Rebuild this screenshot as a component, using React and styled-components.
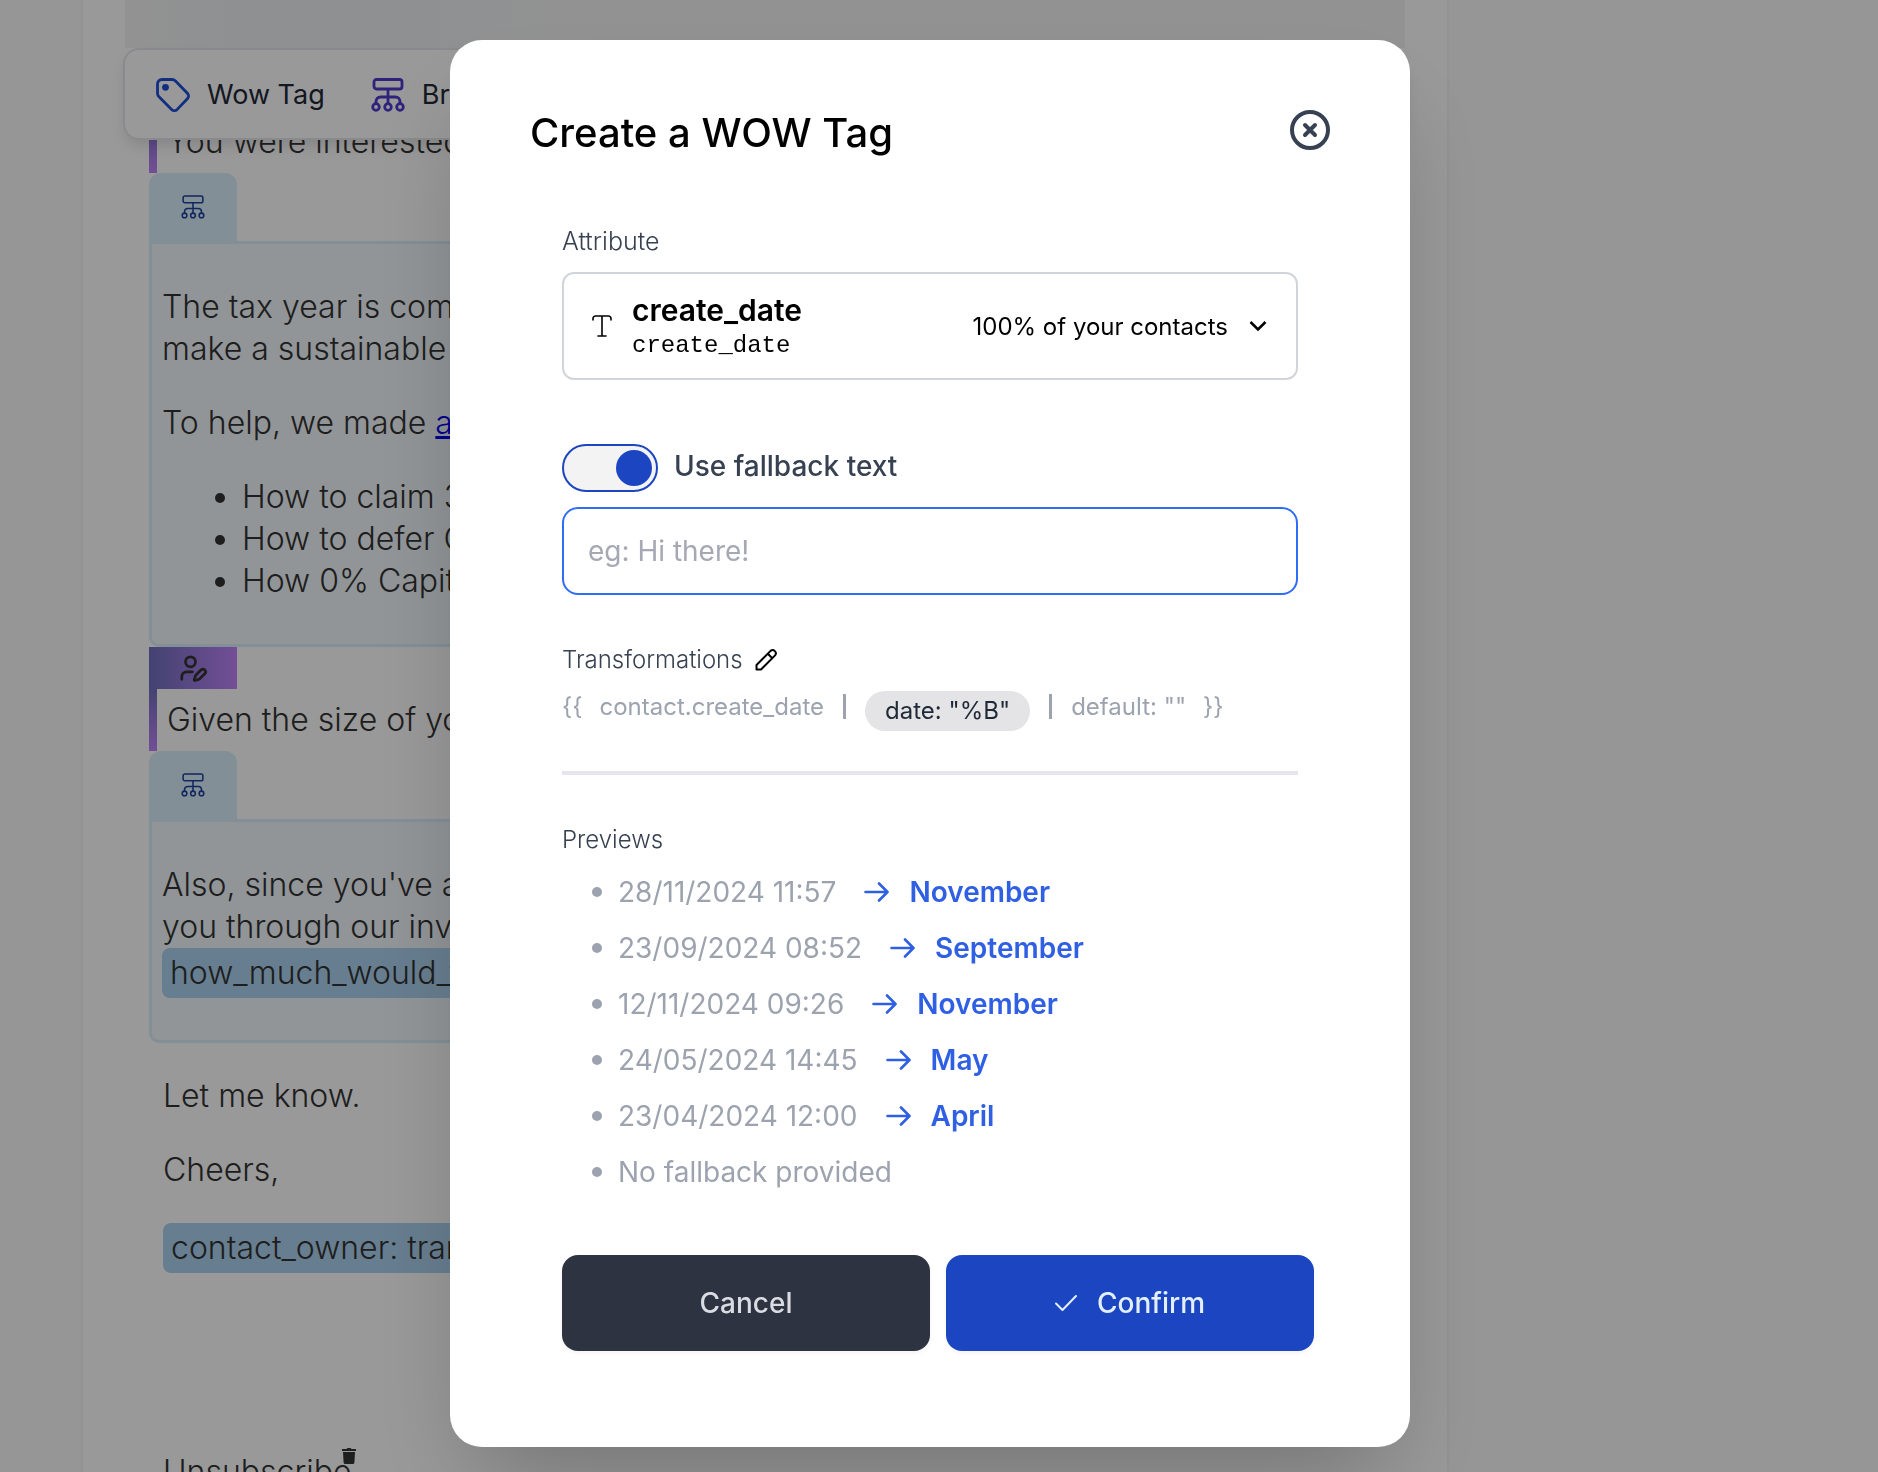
import { useState } from "react";
import styled, { createGlobalStyle } from "styled-components";
import { UserPen } from "lucide-react";

const GlobalStyle = createGlobalStyle`
  * {
    box-sizing: border-box;
  }

  body {
    margin: 0;
    background: #fafafa;
    font-family: Inter, "Liberation Sans", sans-serif;
  }

  button,
  input,
  select {
    font: inherit;
  }
`;

/* ---------- email editor behind the modal ---------- */

const Page = styled.div`
  height: 100vh;
  overflow: hidden;
  padding: 0 429px 0 81px;
`;

const Sheet = styled.main`
  min-height: 100%;
  padding: 0 40px;
  background: white;
  border: solid #f3f4f6;
  border-width: 0 2px;
`;

const Banner = styled.div`
  height: 48px;
  margin: 0 2px;
  background: linear-gradient(90deg, #f4f4f4, #eff1f3 8%, #eff1f3 24%, #f4f4f4 36%);
`;

const Toolbar = styled.nav`
  position: relative;
  z-index: 1;
  display: flex;
  align-items: center;
  gap: 46px;
  height: 92px;
  padding: 2px 31px 0;
  background: white;
  border: 2px solid #e5e7eb;
  border-radius: 16px;
  box-shadow: 0 8px 16px -4px rgba(0, 0, 0, 0.15);
`;

const ToolButton = styled.button`
  display: flex;
  align-items: center;
  gap: 17px;
  padding: 0;
  border: none;
  background: none;
  color: #1f2937;
  font-size: 27px;
  line-height: 40px;
  white-space: nowrap;

  svg {
    color: ${(props) => props.$accent};
  }
`;

const Document = styled.article`
  padding: 0 26px;
  color: #333;
  font-size: 32px;
  font-weight: 350;
  line-height: 42px;

  p {
    margin: 32px 0;
  }

  ul {
    margin: 32px 0;
    padding-left: 80px;
  }
`;

const AiBlock = styled.section`
  padding: 10px 0 10px 10px;
  border-left: 8px solid;
  border-image: linear-gradient(#7070bd, #c084fc) 1;
`;

// the toolbar covers the upper part of this one
const ScrolledBlock = styled(AiBlock)`
  margin-top: -29px;
`;

const AiTab = styled.div`
  display: flex;
  align-items: center;
  justify-content: center;
  width: 88px;
  height: 42px;
  background: linear-gradient(90deg, #7070bd, #c084fc);
`;

const BranchTab = styled.div`
  display: flex;
  align-items: center;
  justify-content: center;
  width: 88px;
  height: 68px;
  border-radius: 12px 12px 0 0;
  background: #daeffb;
  color: #1e429f;
`;

const BranchBox = styled.section`
  padding: 10px;
  border: 3px solid #daeffb;
  border-radius: 0 0 10px 10px;
  background: #f2f8fc;
`;

const Closing = styled.section`
  padding: 0 14px;
`;

const Chip = styled.span`
  display: inline-block;
  padding: 4px 8px;
  border-radius: 8px;
  background: #acd2f0;
  white-space: nowrap;
  vertical-align: top;
`;

const Unsubscribe = styled.p`
  && {
    margin-top: 175px;
  }

  svg {
    margin-left: -10px;
    vertical-align: 19px;
  }
`;

/* ---------- modal ---------- */

const Backdrop = styled.div`
  position: fixed;
  inset: 0;
  z-index: 10;
  display: flex;
  align-items: flex-start;
  justify-content: center;
  padding: 40px 18px 0 0;
  background: rgba(0, 0, 0, 0.4);
  overflow: hidden;
`;

const Modal = styled.div`
  width: 100%;
  max-width: 960px;
  padding: 70px 80px 96px;
  border-radius: 32px;
  background: white;
  box-shadow: 0 50px 100px -24px rgba(0, 0, 0, 0.25);
`;

const Header = styled.header`
  display: flex;
  align-items: flex-start;
  justify-content: space-between;
`;

const Title = styled.h2`
  margin: 0;
  color: black;
  font-size: 40px;
  font-weight: 500;
  line-height: 46px;
`;

const CloseButton = styled.button`
  display: flex;
  padding: 0;
  border: none;
  background: none;
  color: #374151;
`;

const Body = styled.div`
  margin-top: 69px;
  padding: 0 32px;
`;

const Label = styled.label`
  display: block;
  color: #374151;
  font-size: 25px;
  font-weight: 300;
  line-height: 32px;
`;

const AttributeField = styled.div`
  position: relative;
  display: flex;
  align-items: center;
  height: 108px;
  margin-top: 15px;
  padding: 0 29px 0 28px;
  border: 2px solid #d1d5db;
  border-radius: 12px;
  color: black;
`;

const AttributeName = styled.div`
  flex: 1;
  margin-left: 20px;
  font-size: 30px;
  font-weight: 600;
  line-height: 40px;
`;

const AttributeKey = styled.div`
  font-family: "Liberation Mono", monospace;
  font-size: 24px;
  font-weight: 400;
  line-height: 32px;
`;

const Coverage = styled.span`
  margin-right: 21px;
  font-size: 24px;
`;

const HiddenSelect = styled.select`
  position: absolute;
  inset: 0;
  width: 100%;
  opacity: 0;
  cursor: pointer;
`;

const ToggleRow = styled.label`
  display: flex;
  align-items: flex-start;
  gap: 16px;
  margin-top: 64px;
  color: #374151;
  font-size: 28px;
  font-weight: 500;
  line-height: 44px;
`;

const Toggle = styled.input`
  appearance: none;
  display: flex;
  align-items: center;
  width: 96px;
  height: 48px;
  margin: 0;
  padding: 0 4px;
  border: 2px solid #1c45c2;
  border-radius: 24px;
  background: #f3f3f3;

  &::before {
    content: "";
    width: 36px;
    height: 36px;
    border-radius: 50%;
    background: #1c45c2;
  }

  &:checked {
    justify-content: flex-end;
  }
`;

const FallbackInput = styled.input`
  display: block;
  width: 100%;
  height: 88px;
  margin-top: 15px;
  padding: 0 24px;
  border: 2px solid #2f6df6;
  border-radius: 16px;
  outline: none;
  font-size: 28px;

  &::placeholder {
    color: #a6a9b3;
  }
`;

const SectionHead = styled.div`
  display: flex;
  align-items: center;
  gap: 12px;
  margin-top: 49px;
`;

const SectionTitle = styled(Label).attrs({ as: "h3" })`
  margin: 0;
  font-size: 24px;
`;

const EditButton = styled.button`
  display: flex;
  padding: 0;
  border: none;
  background: none;
  color: black;
`;

const Expression = styled.div`
  display: flex;
  align-items: flex-start;
  gap: 17px;
  margin-top: 15px;
  color: #9ca3af;
  font-size: 24px;
  line-height: 32px;
  white-space: nowrap;
`;

const Pipe = styled.span`
  width: 3px;
  height: 25px;
  margin: 3px 2px 0;
  background: #9ca3af;
`;

const Filter = styled.button`
  padding: 4px 20px;
  border: none;
  border-radius: 20px;
  background: #e4e4e7;
  color: #1f2937;
`;

const Divider = styled.hr`
  height: 4px;
  margin: 40px 0 49px;
  border: none;
  background: #e5e5eb;
`;

const PreviewList = styled.ul`
  margin: 8px 0 0;
  padding: 0 0 0 30px;
  list-style: none;
  color: #9ca3af;
  font-size: 28px;
  line-height: 56px;
`;

const PreviewItem = styled.li`
  display: flex;
  align-items: center;

  &::before {
    content: "";
    width: 10px;
    height: 10px;
    margin-right: 16px;
    border-radius: 50%;
    background: #9ca3af;
  }

  svg {
    margin: 0 20px 0 28px;
    color: #2f5fe3;
  }
`;

const Result = styled.strong`
  color: #2f5fe3;
  font-weight: 600;
`;

const Footer = styled.footer`
  display: flex;
  gap: 16px;
  margin: 55px 16px 0 32px;
`;

const Button = styled.button`
  flex: 1;
  display: flex;
  align-items: center;
  justify-content: center;
  gap: 20px;
  height: 96px;
  border: none;
  border-radius: 16px;
  background: ${(props) => (props.$primary ? "#1c45c2" : "#2d3340")};
  color: ${(props) => (props.$primary ? "#e1effe" : "#d9dce3")};
  box-shadow: 0 2px 4px rgba(0, 0, 0, 0.05);
  font-size: 28px;
  font-weight: 500;
`;

/* ---------- icons ---------- */

const TagIcon = () => (
  <svg width="34" height="34" viewBox="0 0 34 34" fill="none" stroke="currentColor" strokeWidth="2.8" strokeLinejoin="round">
    <path d="M1.5 6A4.5 4.5 0 0 1 6 1.5h10A5 5 0 0 1 19.5 3L31.4 15.2a4 4 0 0 1 0 5.6L21.2 31.4a4 4 0 0 1-5.6 0L3 18.8a5 5 0 0 1-1.5-3.5z" />
    <circle cx="9.5" cy="9.3" r="3.4" fill="currentColor" stroke="none" />
  </svg>
);

const BranchIcon = ({ size = 34, stroke = 2.8 }) => (
  <svg width={size} height={size} viewBox="0 0 34 34" fill="none" stroke="currentColor" strokeWidth={stroke}>
    <rect x="3" y="1.5" width="28" height="9.5" rx="2.5" />
    <path d="M17 11v15M5 26v-2.5A4.5 4.5 0 0 1 9.5 19h15a4.5 4.5 0 0 1 4.5 4.5V26" />
    <circle cx="5" cy="29" r="3.3" />
    <circle cx="17" cy="29" r="3.3" />
    <circle cx="29" cy="29" r="3.3" />
  </svg>
);

const TrashIcon = () => (
  <svg width="14" height="16" viewBox="0 0 14 16" fill="currentColor">
    <path d="M0 1h4.5l1-1h3l1 1H14v2H0zM1 4h12l-.6 10.5a1.6 1.6 0 0 1-1.6 1.5H3.2a1.6 1.6 0 0 1-1.6-1.5z" />
  </svg>
);

const CloseIcon = () => (
  <svg width="40" height="40" viewBox="0 0 40 40" fill="none" stroke="currentColor" strokeWidth="4" strokeLinecap="round">
    <circle cx="20" cy="20" r="18" />
    <path d="M15 15l10 10M25 15L15 25" />
  </svg>
);

const TextIcon = () => (
  <svg width="20" height="22" viewBox="0 0 20 22" fill="none" stroke="currentColor" strokeWidth="1.6" strokeLinecap="round">
    <path d="M1 5V3.5A2.5 2.5 0 0 1 3.5 1h13A2.5 2.5 0 0 1 19 3.5V5M10 1v20M6 21h8" />
  </svg>
);

const ChevronIcon = () => (
  <svg width="18" height="12" viewBox="0 0 18 12" fill="none" stroke="currentColor" strokeWidth="2.6">
    <path d="M1.5 2L9 9.5 16.5 2" />
  </svg>
);

const PencilIcon = () => (
  <svg width="22" height="22" viewBox="1 1 22 22" fill="none" stroke="currentColor" strokeWidth="2" strokeLinejoin="round">
    <path d="M2.5 21.5V17L16.6 2.9a3.2 3.2 0 0 1 4.5 4.5L7 21.5zM13.8 5.7l4.5 4.5" />
  </svg>
);

const ArrowIcon = () => (
  <svg width="25" height="20" viewBox="0 0 25 20" fill="none" stroke="currentColor" strokeWidth="2.6" strokeLinecap="round" strokeLinejoin="round">
    <path d="M1.5 10h22M15 1.5l8.500 8.500L15 18.500" />
  </svg>
);

const CheckIcon = () => (
  <svg width="22" height="16" viewBox="0 0 22 16" fill="none" stroke="currentColor" strokeWidth="2" strokeLinecap="round" strokeLinejoin="round">
    <path d="M1 8.5L7.5 15 21 1" />
  </svg>
);

const previews = [
  { date: "28/11/2024 11:57", month: "November" },
  { date: "23/09/2024 08:52", month: "September" },
  { date: "12/11/2024 09:26", month: "November" },
  { date: "24/05/2024 14:45", month: "May" },
  { date: "23/04/2024 12:00", month: "April" },
];

function Editor() {
  return (
    <Page>
      <Sheet>
        <Banner />
        <Toolbar>
          <ToolButton $accent="#1d4ed8">
            <TagIcon />
            Wow Tag
          </ToolButton>
          <ToolButton $accent="#4f39d0">
            <BranchIcon />
            Branch
          </ToolButton>
        </Toolbar>
        <Document>
          <ScrolledBlock>You were interested</ScrolledBlock>
          <BranchTab>
            <BranchIcon size={24} stroke={2.2} />
          </BranchTab>
          <BranchBox>
            <p>
              The tax year is com
              <br />
              make a sustainable
            </p>
            <p>
              To help, we made <a href="#guide">a</a>
            </p>
            <ul>
              <li>How to claim 3</li>
              <li>How to defer C</li>
              <li>How 0% Capit</li>
            </ul>
          </BranchBox>
          <AiTab>
            <UserPen size={30} strokeWidth={2.2} />
          </AiTab>
          <AiBlock>Given the size of yo</AiBlock>
          <BranchTab>
            <BranchIcon size={24} stroke={2.2} />
          </BranchTab>
          <BranchBox>
            <p>
              Also, since you've a
              <br />
              you through our inv
              <br />
              <Chip>how_much_would_y</Chip>
            </p>
          </BranchBox>
          <Closing>
            <p>Let me know.</p>
            <p>Cheers,</p>
            <p>
              <Chip>contact_owner: tran</Chip>
            </p>
            <Unsubscribe>
              Unsubscribe
              <TrashIcon />
            </Unsubscribe>
          </Closing>
        </Document>
      </Sheet>
    </Page>
  );
}

function WowTagModal() {
  const [useFallback, setUseFallback] = useState(true);
  const [fallback, setFallback] = useState("");

  return (
    <Backdrop>
      <Modal role="dialog" aria-modal="true" aria-labelledby="modal-title">
        <Header>
          <Title id="modal-title">Create a WOW Tag</Title>
          <CloseButton aria-label="Close">
            <CloseIcon />
          </CloseButton>
        </Header>

        <Body>
          <Label htmlFor="attribute">Attribute</Label>
          <AttributeField>
            <TextIcon />
            <AttributeName>
              create_date
              <AttributeKey>create_date</AttributeKey>
            </AttributeName>
            <Coverage>100% of your contacts</Coverage>
            <ChevronIcon />
            <HiddenSelect id="attribute">
              <option>create_date</option>
            </HiddenSelect>
          </AttributeField>

          <ToggleRow>
            <Toggle
              type="checkbox"
              checked={useFallback}
              onChange={(e) => setUseFallback(e.target.checked)}
            />
            Use fallback text
          </ToggleRow>
          <FallbackInput
            type="text"
            aria-label="Fallback text"
            placeholder="eg: Hi there!"
            value={fallback}
            onChange={(e) => setFallback(e.target.value)}
          />

          <SectionHead>
            <SectionTitle>Transformations</SectionTitle>
            <EditButton aria-label="Edit transformations">
              <PencilIcon />
            </EditButton>
          </SectionHead>
          <Expression>
            <span>{"{{"}</span>
            <span>contact.create_date</span>
            <Pipe />
            <Filter>date: "%B"</Filter>
            <Pipe />
            <span>default: "{fallback}"</span>
            <span>{"}}"}</span>
          </Expression>
          <Divider />

          <SectionTitle>Previews</SectionTitle>
          <PreviewList>
            {previews.map((preview) => (
              <PreviewItem key={preview.date}>
                {preview.date}
                <ArrowIcon />
                <Result>{preview.month}</Result>
              </PreviewItem>
            ))}
            <PreviewItem>No fallback provided</PreviewItem>
          </PreviewList>
        </Body>

        <Footer>
          <Button>Cancel</Button>
          <Button $primary>
            <CheckIcon />
            Confirm
          </Button>
        </Footer>
      </Modal>
    </Backdrop>
  );
}

function App() {
  return (
    <>
      <GlobalStyle />
      <Editor />
      <WowTagModal />
    </>
  );
}

export default App;
